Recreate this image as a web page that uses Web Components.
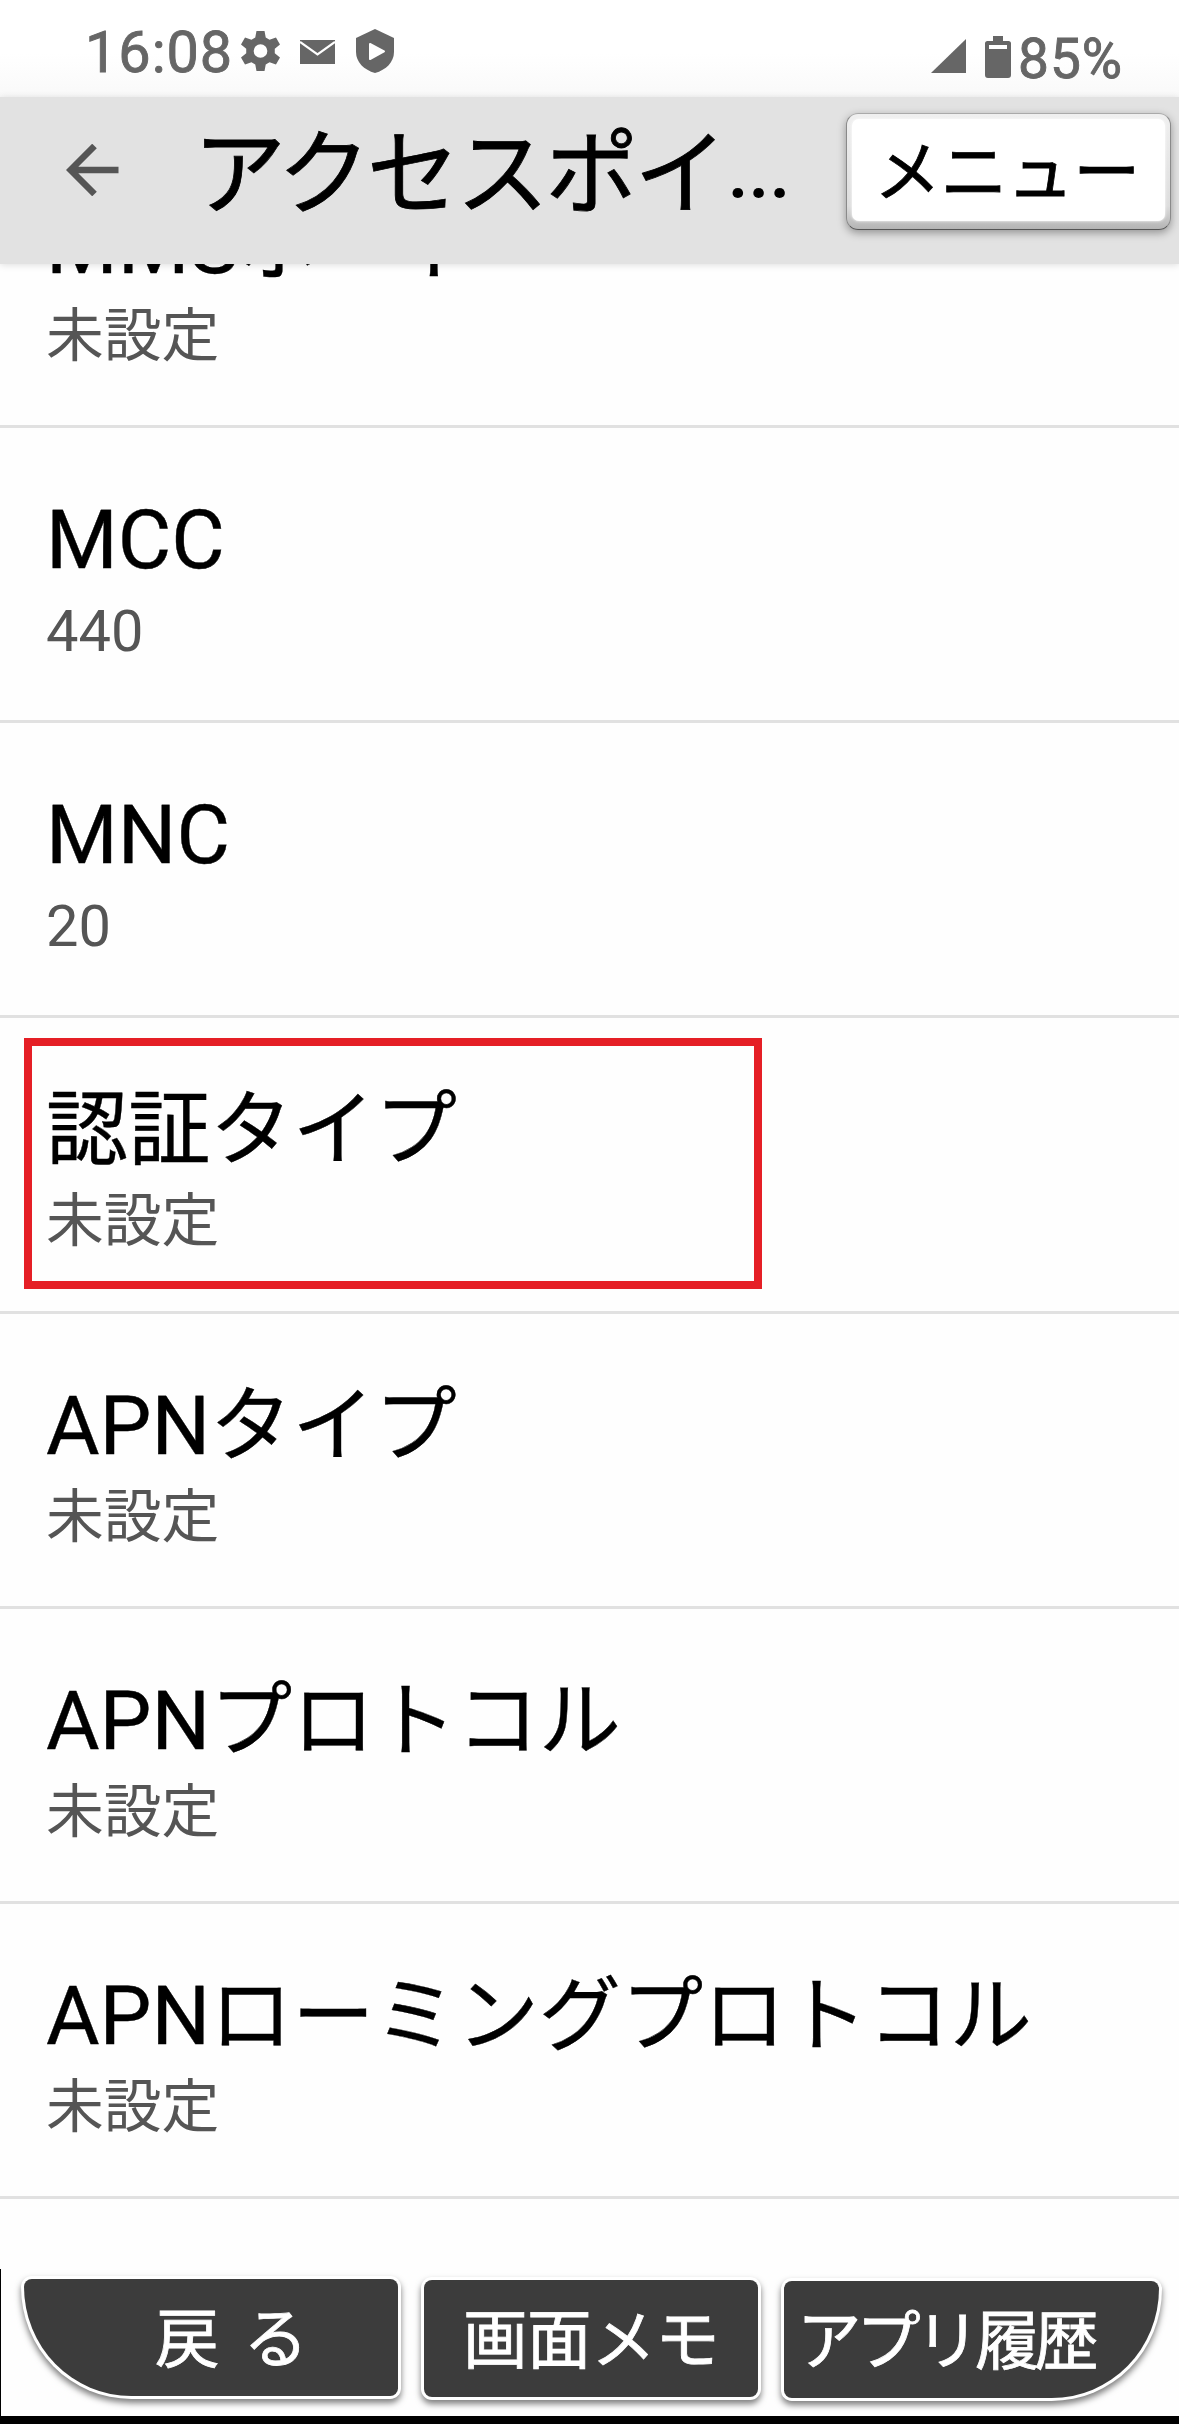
<!DOCTYPE html>
<html lang="ja">
<head>
<meta charset="utf-8">
<title>アクセスポイント</title>
<style>
html,body{margin:0;padding:0}
body{width:1179px;height:2424px;overflow:hidden;background:#fefefe;color:#000;font-family:Roboto,"Noto Sans CJK JP",sans-serif}
</style>
</head>
<body>
<phone-screen>
  <status-bar slot="status"><span slot="time">16:08</span><span slot="level">85%</span></status-bar>
  <app-header slot="header">アクセスポイ<menu-button slot="action">メニュー</menu-button></app-header>
  <setting-row><span slot="title">MMSポート</span>未設定</setting-row>
  <setting-row><span slot="title">MCC</span>440</setting-row>
  <setting-row><span slot="title">MNC</span>20</setting-row>
  <setting-row marked><span slot="title">認証タイプ</span>未設定</setting-row>
  <setting-row><span slot="title">APNタイプ</span>未設定</setting-row>
  <setting-row><span slot="title">APNプロトコル</span>未設定</setting-row>
  <setting-row><span slot="title">APNローミングプロトコル</span>未設定</setting-row>
  <soft-keys slot="keys">
    <soft-key class="back">戻 る</soft-key>
    <soft-key class="memo">画面メモ</soft-key>
    <soft-key class="recent">アプリ履歴</soft-key>
  </soft-keys>
</phone-screen>
<script>
const define = (name, html) => customElements.define(name, class extends HTMLElement {
  constructor() {
    super();
    this.attachShadow({ mode: 'open' }).innerHTML = html;
  }
});

define('phone-screen', `
<style>
:host{display:flex;flex-direction:column;width:1179px;height:2424px;overflow:hidden}
.list{flex:1;min-height:0;overflow:hidden}
.scrolled{margin-top:-131.500px}
</style>
<slot name="status"></slot><slot name="header"></slot>
<div class="list"><div class="scrolled"><slot></slot></div></div>
<slot name="keys"></slot>`);

define('status-bar', `
<style>
:host{display:flex;box-sizing:border-box;height:97px;flex:none;padding-left:85px;color:#666;
background:linear-gradient(#fff 55%,#f9f9f9)}
svg{display:block;fill:#666;flex:none}
.time{font-size:57.500px;line-height:66px;margin-top:20px;width:156px;letter-spacing:1px;-webkit-text-stroke:.9px #666}
.gear{margin-top:31px}.mail{margin:40px 0 0 20px}.shield{margin:29px 0 0 21px}
.sig{margin:39px 0 0 537px}.bat{margin:36px 0 0 19px}
.level{font-size:55px;line-height:64px;margin:27px 0 0 7px;letter-spacing:1px;-webkit-text-stroke:.9px #666}
</style>
<div class="time"><slot name="time"></slot></div>
<svg class="gear" width="39" height="40" viewBox="2.3 2 19.4 20" preserveAspectRatio="none"><path d="M10 2h4l.6 3.300 1.900 1.100 3.200-1.200 2 3.500-2.600 2.200v2.200l2.600 2.200-2 3.500-3.200-1.200-1.900 1.100L14 22h-4l-.6-3.300-1.900-1.100-3.200 1.200-2-3.500 2.600-2.200v-2.200L2.300 8.700l2-3.500 3.200 1.200 1.900-1.100zM12 8.600a3.400 3.400 0 1 0 0 6.800 3.400 3.400 0 0 0 0-6.800z" fill-rule="evenodd"/></svg>
<svg class="mail" width="35" height="24"><path d="M0 0H35V24H0z"/><path d="M0 2L17.500 14.500 35 2" fill="none" stroke="#fff" stroke-width="2.200"/></svg>
<svg class="shield" width="38" height="44"><path d="M19 0L38 9V23C38 33 30 41 19 44C8 41 0 33 0 23V9Z"/><path d="M14 15L28 22.300 14 30Z" fill="#fff" stroke="#fff" stroke-width="2" stroke-linejoin="round"/></svg>
<svg class="sig" width="35" height="34"><path d="M35 0V34H0Z"/></svg>
<svg class="bat" width="26" height="42"><path d="M8 0h10v5h5.500a2.500 2.500 0 0 1 2.500 2.500V39a3 3 0 0 1-3 3H3a3 3 0 0 1-3-3V7.500A2.500 2.500 0 0 1 2.500 5H8z"/><path d="M4 9h18v4H4z" fill="#fff"/></svg>
<div class="level"><slot name="level"></slot></div>`);

define('app-header', `
<style>
:host{display:flex;box-sizing:border-box;height:167px;flex:none;background:#e2e2e2;position:relative;z-index:1;
padding:0 8px 0 66px;box-shadow:0 1px 7px rgba(0,0,0,.13)}
svg{display:block;margin-top:47px;flex:none}
.title{display:flex;margin:19px 0 0 74px;width:653px;font-size:93px;line-height:120px;white-space:nowrap}
.name{letter-spacing:-3.800px}
.name slot{-webkit-text-stroke:.8px #000}
.dots{font-size:77px;font-weight:500;letter-spacing:-.6px;line-height:113px;margin-left:4px}
</style>
<svg width="53" height="52" viewBox="0 0 53 52" fill="none" stroke="#555" stroke-width="6.500"><path d="M52.500 26H4M28.500 2L4.500 26L28.500 50"/></svg>
<div class="title"><span class="name"><slot></slot></span><span class="dots">...</span></div>
<slot name="action"></slot>`);

define('menu-button', `
<style>
:host{display:block;box-sizing:border-box;width:325px;height:117px;margin-top:16px;flex:none;border-radius:12px;
border:1.500px solid #8a8a8a;border-top-color:#aaa;border-bottom-color:#555;padding:5px 5px 7px;
background:linear-gradient(#f0f0f0,#ddd 80%,#b4b4b4);box-shadow:0 3px 9px rgba(0,0,0,.35)}
.face{box-sizing:border-box;height:102px;border-radius:7px;background:#fff;box-shadow:0 0 3px #fff;
font-size:67px;letter-spacing:-.6px;line-height:108px;padding-left:22px;white-space:nowrap;-webkit-text-stroke:.8px #000}
</style>
<div class="face"><slot></slot></div>`);

define('setting-row', `
<style>
:host{display:flex;flex-direction:column;box-sizing:border-box;height:295.250px;padding:62px 0 0 46px;
border-bottom:3px solid #e1e1e1;position:relative;white-space:nowrap}
.t{font-size:82.200px;line-height:100px;-webkit-text-stroke:.4px #000}
.v{font-size:57.800px;line-height:70px;margin-top:6px;color:#555}
.mark{display:none}
:host([marked]) .mark{display:block;position:absolute;box-sizing:border-box;left:24px;top:20px;width:738px;height:251px;border:8px solid #e51f26}
</style>
<div class="t"><slot name="title"></slot></div>
<div class="v"><slot></slot></div>
<div class="mark"></div>`);

define('soft-keys', `
<style>
:host{display:flex;box-sizing:border-box;height:155px;flex:none;gap:26px;padding:10px 0 0 23px;
border-left:1px solid #000;border-bottom:8px solid #000;align-items:flex-start}
</style>
<slot></slot>`);

define('soft-key', `
<style>
:host{display:block;box-sizing:border-box;flex:none;height:117px;background:#3c3c3c;color:#fff;border-radius:8px;
box-shadow:0 0 0 3px #fff,0 4px 6px 3px rgba(0,0,0,.5);font-size:64.500px;line-height:123px;white-space:nowrap;-webkit-text-stroke:.8px #fff}
:host(.back){width:374px;border-radius:8px 8px 8px 110px / 8px 8px 8px 112px;padding-left:131px;letter-spacing:4px}
:host(.memo){width:334px;margin-top:1px;padding-left:39px;letter-spacing:-.4px}
:host(.recent){width:375px;margin-top:2px;border-radius:8px 8px 110px 8px / 8px 8px 112px 8px;padding-left:13px;letter-spacing:-5.200px}
</style>
<slot></slot>`);
</script>
</body>
</html>
